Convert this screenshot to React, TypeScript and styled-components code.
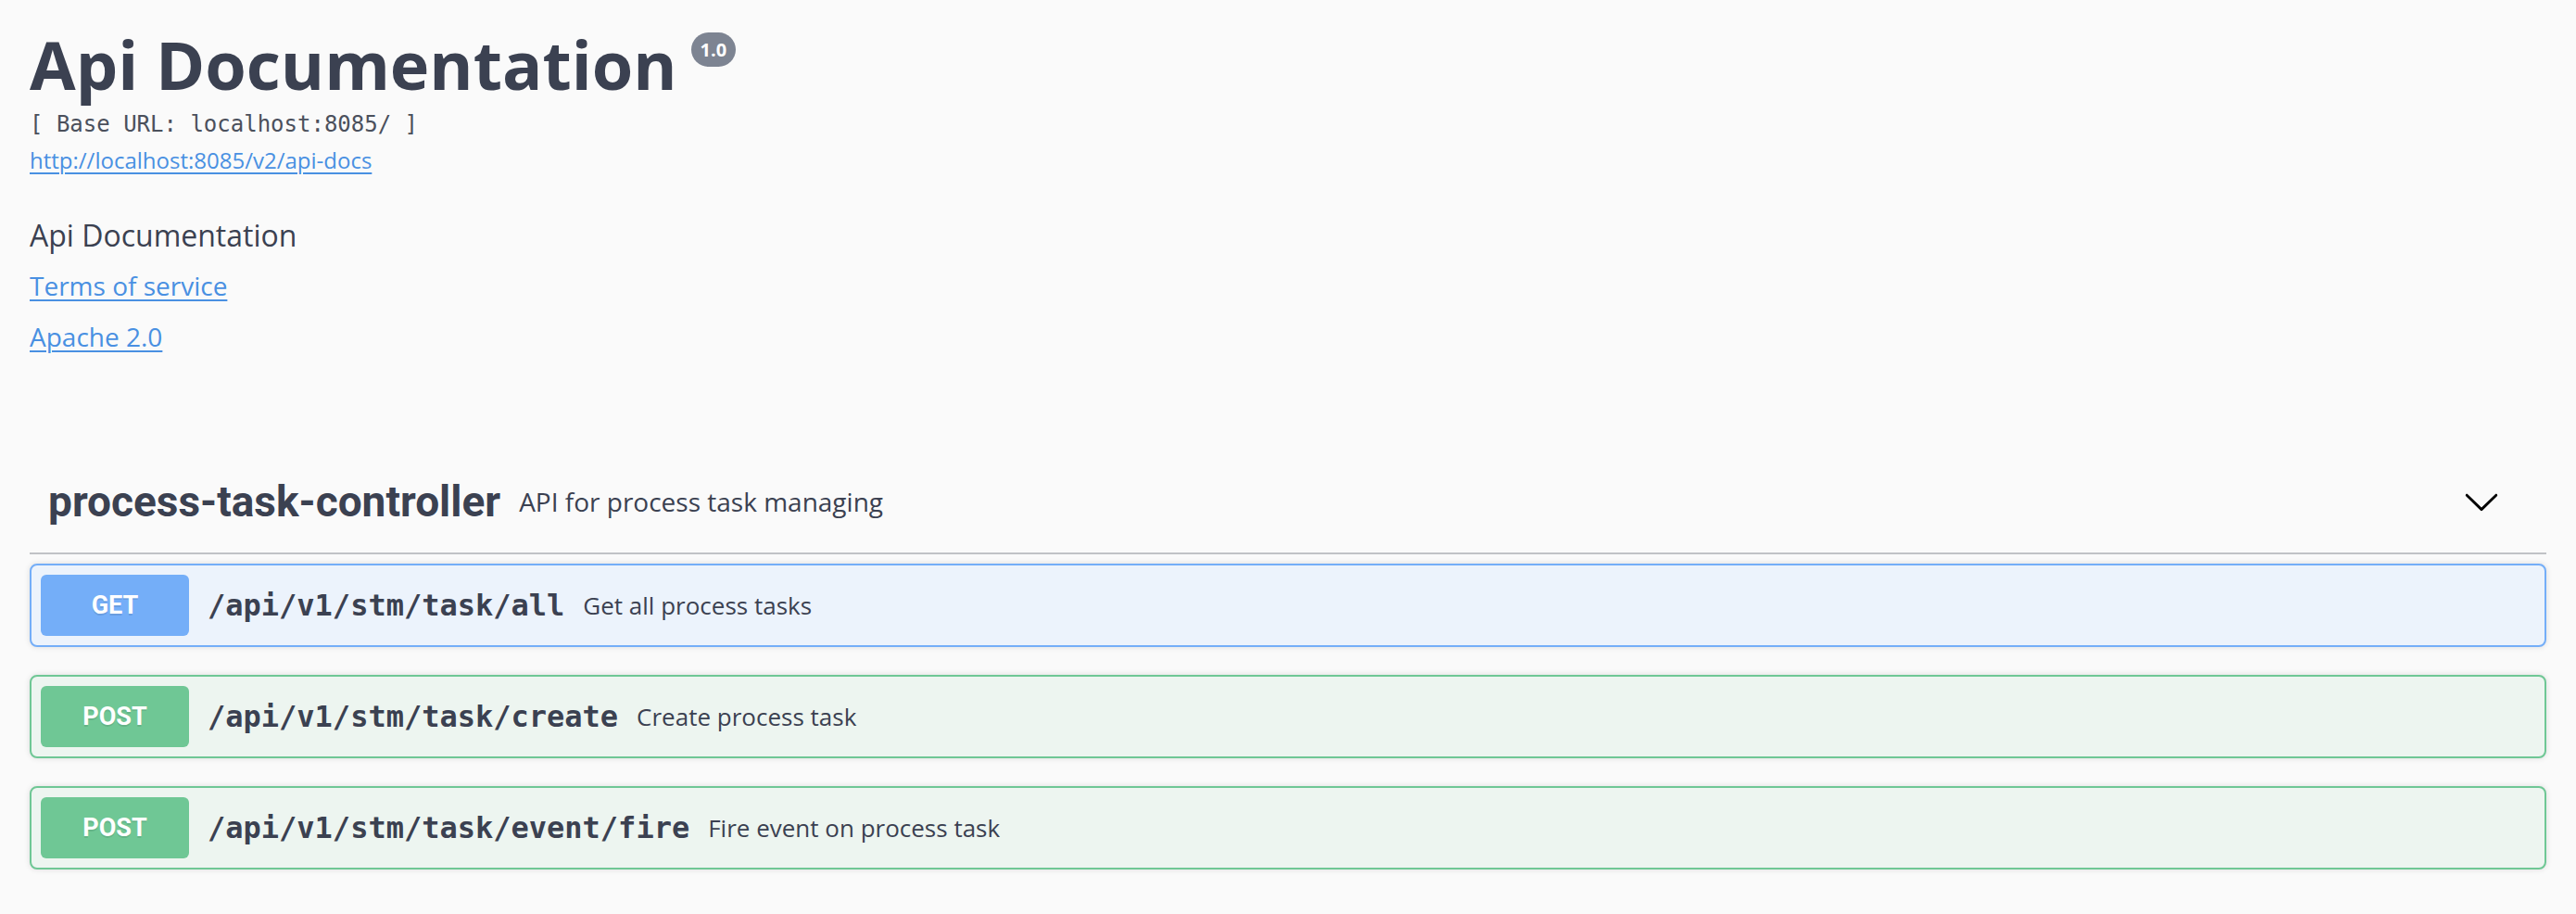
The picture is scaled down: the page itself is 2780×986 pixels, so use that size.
import React from "react";
import styled, { createGlobalStyle } from "styled-components";

const GlobalStyle = createGlobalStyle`
  body {
    margin: 0;
    background: #fafafa;
    font-family: "Open Sans", sans-serif;
    color: #3b4151;
  }
`;

const narrow = `Roboto, "Open Sans", sans-serif`;

const Wrapper = styled.div`
  padding: 29px 32px 40px;
`;

const Info = styled.div`
  display: flex;
  flex-direction: column;
  align-items: flex-start;
`;

const Title = styled.h2`
  display: flex;
  align-items: flex-start;
  margin: 0;
  font-family: "Open Sans", sans-serif;
  font-weight: 700;
  font-size: 72px;
  line-height: 80px;
  color: #3b4151;
`;

const Version = styled.small`
  margin: 6px 0 0 15px;
  height: 37px;
  padding: 0 10px;
  border-radius: 20px;
  background: #7d8492;
  color: #fff;
  font-family: "Open Sans", sans-serif;
  font-weight: 700;
  font-size: 20px;
  line-height: 37px;
`;

const BaseUrl = styled.pre`
  margin: 9px 0 0;
  font-family: "DejaVu Sans Mono", "Liberation Mono", monospace;
  font-weight: 300;
  font-size: 24px;
  line-height: 32px;
  color: #4b505c;
`;

const InfoLink = styled.a<{ $gap: number; $size: number }>`
  display: block;
  margin-top: ${(p) => p.$gap}px;
  font-family: "Open Sans", sans-serif;
  font-size: ${(p) => p.$size}px;
  line-height: ${(p) => p.$size + 8}px;
  color: #4990e2;
  text-decoration: underline;
  text-decoration-thickness: 2px;
  text-underline-offset: 4px;
`;

const Description = styled.p`
  margin: 43px 0 0;
  font-size: 32px;
  line-height: 44px;
  color: #3b4151;
`;

const TagSection = styled.section`
  margin-top: 115px;
`;

const TagRow = styled.div`
  display: flex;
  align-items: center;
  height: 102px;
  box-sizing: border-box;
  padding: 0 50px 10px 20px;
  border-bottom: 2px solid rgba(59, 65, 81, 0.3);
`;

const TagName = styled.span`
  font-family: ${narrow};
  font-weight: 700;
  font-size: 46px;
  color: #3b4151;
`;

const TagDesc = styled.small`
  flex: 1;
  padding: 0 20px;
  font-family: "Open Sans", sans-serif;
  font-size: 28px;
  color: #3b4151;
`;

const OpList = styled.div`
  display: flex;
  flex-direction: column;
  gap: 30px;
  margin-top: 10px;
`;

const methodColors = {
  GET: { main: "#74aef8", bg: "#ecf3fc" },
  POST: { main: "#6fc795", bg: "#edf5f0" },
};

type Method = keyof typeof methodColors;

const OpBlock = styled.div<{ $method: Method }>`
  display: flex;
  align-items: center;
  padding: 10px;
  border: 2px solid ${(p) => methodColors[p.$method].main};
  border-radius: 8px;
  background: ${(p) => methodColors[p.$method].bg};
  box-shadow: 0 0 6px rgba(0, 0, 0, 0.12);
`;

const MethodBadge = styled.span<{ $method: Method }>`
  display: flex;
  align-items: center;
  justify-content: center;
  min-width: 160px;
  height: 66px;
  border-radius: 6px;
  background: ${(p) => methodColors[p.$method].main};
  color: #fff;
  font-family: ${narrow};
  font-weight: 700;
  font-size: 27px;
  text-shadow: 0 2px 0 rgba(0, 0, 0, 0.1);
`;

const OpPath = styled.span`
  padding: 0 20px;
  font-family: "DejaVu Sans Mono", "Liberation Mono", monospace;
  font-weight: 700;
  font-size: 32px;
  color: #3b4151;
`;

const OpDesc = styled.span`
  flex: 1;
  font-family: "Open Sans", sans-serif;
  font-size: 26px;
  color: #3b4151;
`;

const Chevron = () => (
  <svg width="40" height="40" viewBox="0 0 20 20" aria-hidden="true">
    <path
      fill="#000"
      d="M17.418 6.109c.272-.268.709-.268.979 0s.271.701 0 .969l-7.908 7.83c-.27.268-.707.268-.979 0l-7.908-7.83c-.27-.268-.27-.701 0-.969.271-.268.709-.268.979 0L10 13.25l7.418-7.141z"
    />
  </svg>
);

const operations: { method: Method; path: string; summary: string }[] = [
  { method: "GET", path: "/api/v1/stm/task/all", summary: "Get all process tasks" },
  { method: "POST", path: "/api/v1/stm/task/create", summary: "Create process task" },
  { method: "POST", path: "/api/v1/stm/task/event/fire", summary: "Fire event on process task" },
];

export default function App() {
  return (
    <>
      <GlobalStyle />
      <Wrapper>
        <Info>
          <Title>
            Api Documentation
            <Version>1.0</Version>
          </Title>
          <BaseUrl>[ Base URL: localhost:8085/ ]</BaseUrl>
          <InfoLink $gap={7} $size={24} href="#">
            http://localhost:8085/v2/api-docs
          </InfoLink>
          <Description>Api Documentation</Description>
          <InfoLink $gap={14} $size={28} href="#">
            Terms of service
          </InfoLink>
          <InfoLink $gap={19} $size={28} href="#">
            Apache 2.0
          </InfoLink>
        </Info>
        <TagSection>
          <TagRow>
            <TagName>process-task-controller</TagName>
            <TagDesc>API for process task managing</TagDesc>
            <Chevron />
          </TagRow>
          <OpList>
            {operations.map((op) => (
              <OpBlock key={op.path} $method={op.method}>
                <MethodBadge $method={op.method}>{op.method}</MethodBadge>
                <OpPath>{op.path}</OpPath>
                <OpDesc>{op.summary}</OpDesc>
              </OpBlock>
            ))}
          </OpList>
        </TagSection>
      </Wrapper>
    </>
  );
}
